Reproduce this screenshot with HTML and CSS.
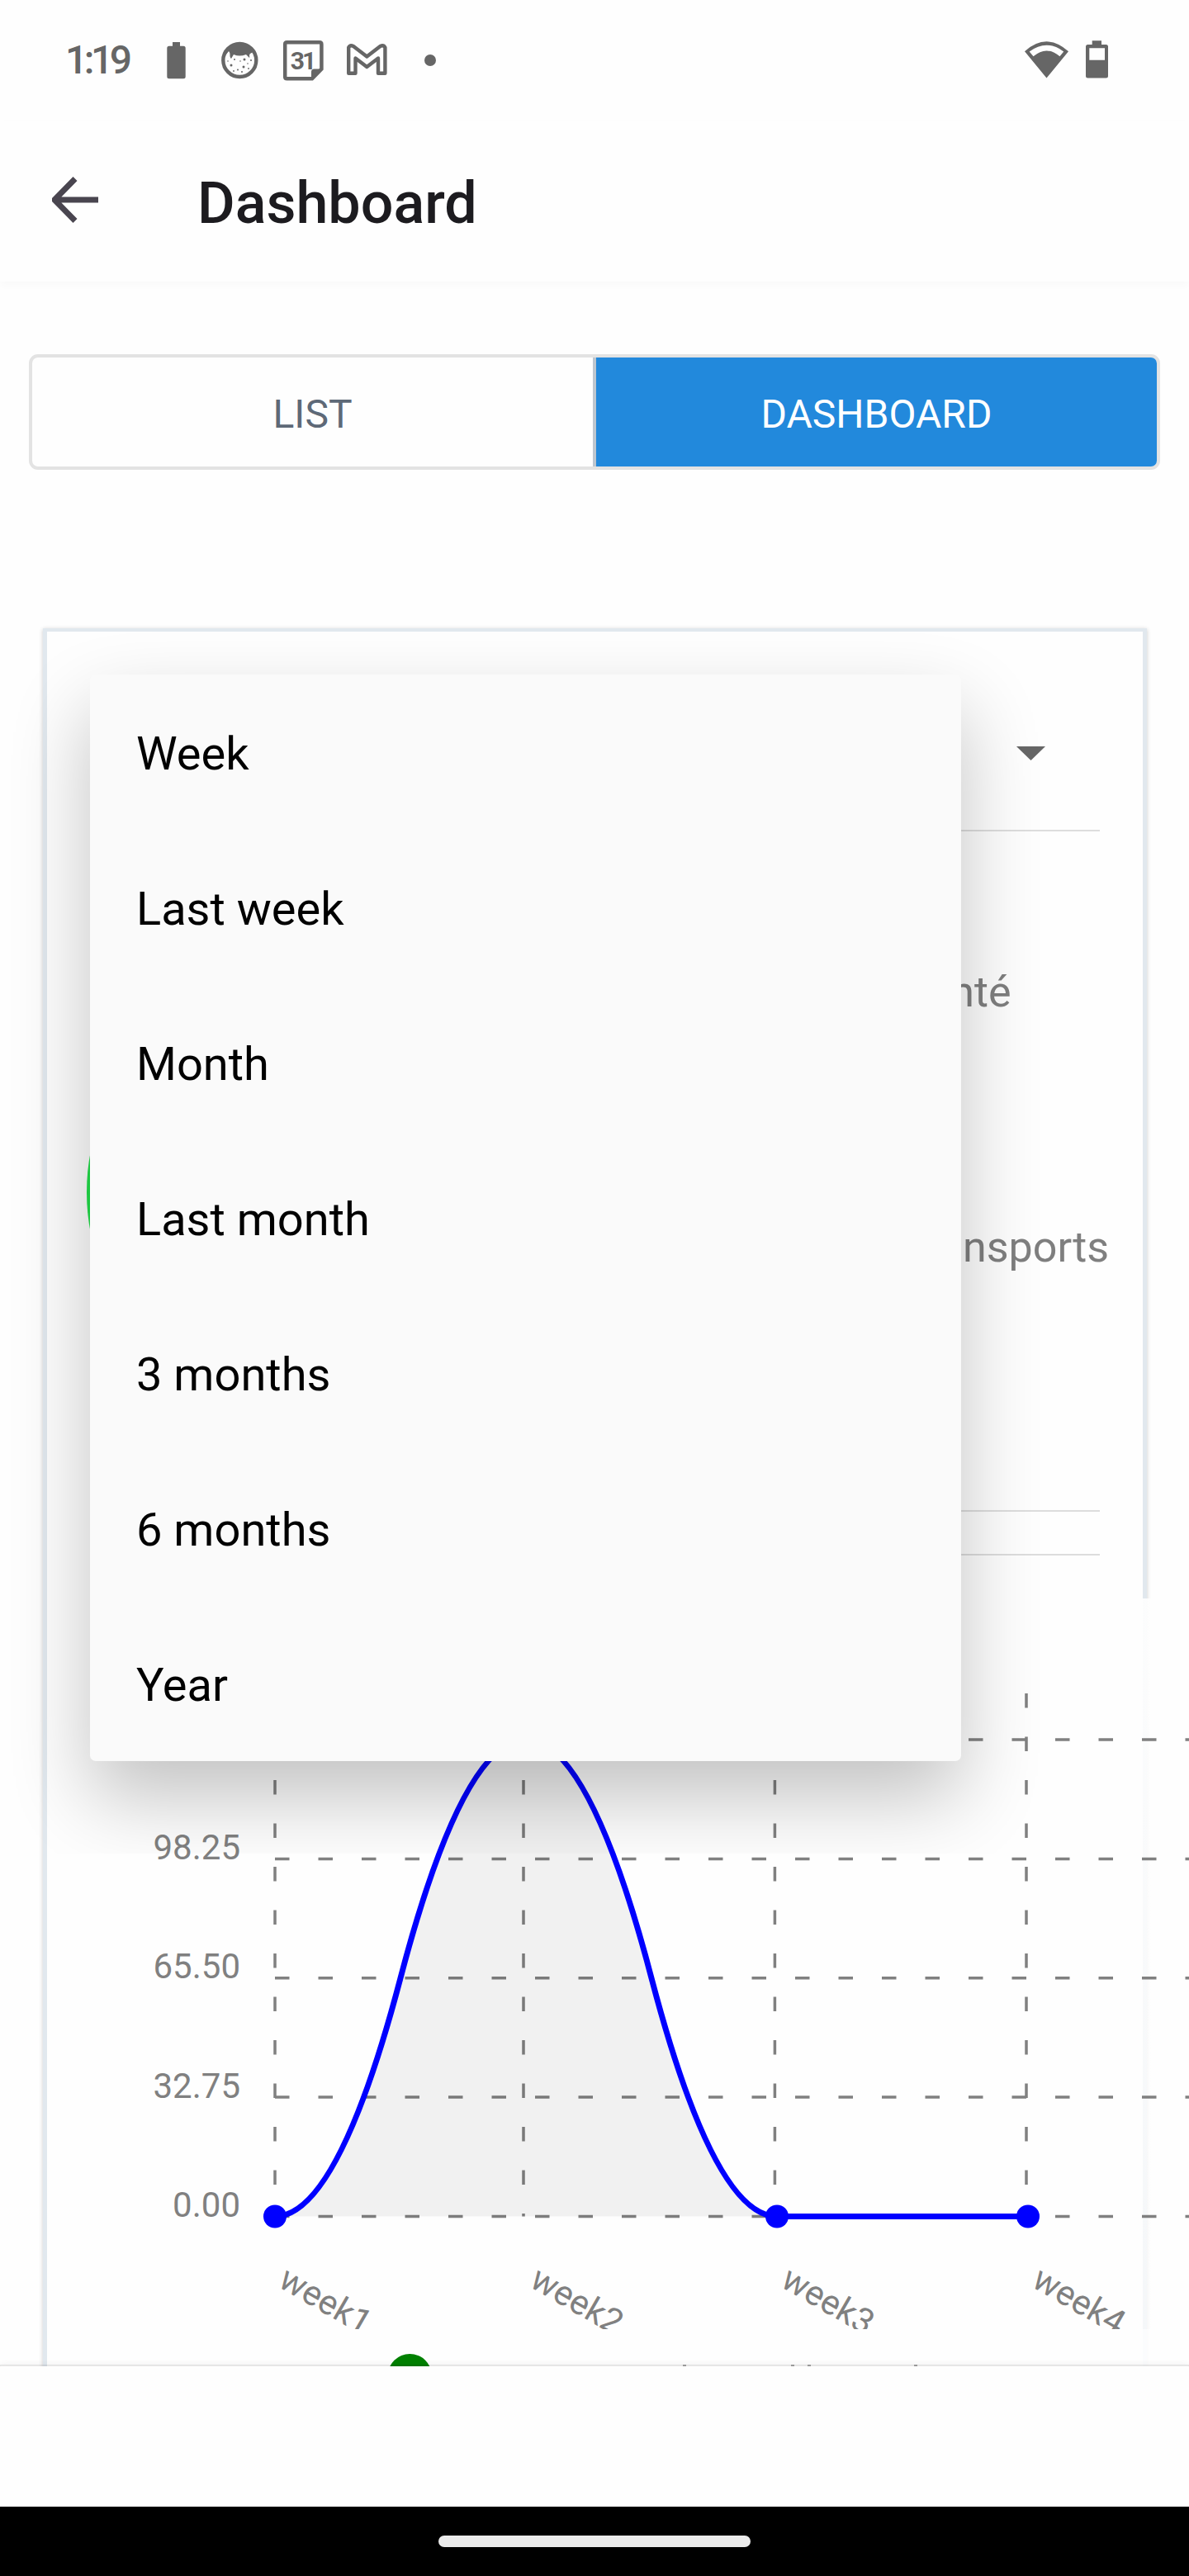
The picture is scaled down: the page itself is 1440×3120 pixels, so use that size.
FILE: index.html
```html
<!DOCTYPE html>
<html lang="en">
<head>
<meta charset="utf-8">
<title>Dashboard</title>
<link rel="stylesheet" href="styles.css">
</head>
<body>
<div class="screen">
  <div class="statusbar">
    <span class="clock">1:19</span>
    <svg class="status-left" width="340" height="60" viewBox="195 43 340 60" fill="#666">
      <path d="M209 51h9v4.700h4.200a2.500 2.500 0 0 1 2.500 2.500v34.600a2.500 2.500 0 0 1-2.500 2.500h-17.400a2.500 2.500 0 0 1-2.500-2.500V58.200a2.500 2.500 0 0 1 2.500-2.500h4.200z"/>
      <circle cx="290.300" cy="73" r="20" fill="none" stroke="#666" stroke-width="4.400"/>
      <path d="M273 62C280 50 301 50 308 62L303 65C301 67 303 69 302 70L298 66Q290 69 283 66L280 71C277 68 280 65 277 62L273 67Z"/>
      <g><circle cx="280" cy="79" r="1.500"/><circle cx="284" cy="72" r="1"/><circle cx="296" cy="72" r="1.500"/><circle cx="291" cy="74" r=".8"/><circle cx="295" cy="81" r="1.500"/><circle cx="288" cy="84.500" r="1"/><circle cx="283" cy="86" r=".9"/><circle cx="293" cy="87" r="1"/><circle cx="300" cy="77" r=".8"/><circle cx="304" cy="73" r="1"/><circle cx="276" cy="74" r=".8"/><circle cx="301" cy="83" r=".9"/></g>
      <path d="M347.500 51.300H387q2.400 0 2.400 2.400V83.500L378 95.200H347.500q-2.300 0-2.300-2.300V53.600q0-2.300 2.300-2.300z" fill="none" stroke="#666" stroke-width="4.500"/>
      <path d="M377 97V87q0-3.500 3.500-3.500h10z"/>
      <text class="cal-day" x="366" y="83.500" text-anchor="middle">31</text>
      <path d="M422.200 57.500Q424 54 428 56L444.300 68.500 460.500 56Q464.500 54 466.400 57.500V88.800H458V70.500L444.300 81 430.500 70.500V88.800H422.200Z" fill="none" stroke="#666" stroke-width="4.400" stroke-linejoin="round"/>
      <circle cx="521" cy="73" r="7"/>
    </svg>
    <svg class="status-right" width="110" height="60" viewBox="1236 43 110 60" fill="#666">
      <path fill-rule="evenodd" d="M1241 62.200Q1267.500 38.500 1294 62.200L1267.500 94.600ZM1246.700 62.500L1251.500 68.300Q1267.500 54.500 1283.500 68.300L1288.200 62.500Q1267.500 47 1246.700 62.500Z"/>
      <path fill-rule="evenodd" d="M1322.700 49.200h11.300v4.800h5.500a2.500 2.500 0 0 1 2.500 2.500v35.600a2.500 2.500 0 0 1-2.500 2.500h-22a2.500 2.500 0 0 1-2.500-2.500V56.500a2.500 2.500 0 0 1 2.500-2.500h5.200zM1319.300 58.300v14.400h18.700V58.300z"/>
    </svg>
  </div>
  <header class="appbar">
    <svg class="back" width="56" height="56" viewBox="0 0 56 56"><path d="M28 2.500L3 28l25 25.500M4 28h52" fill="none" stroke="#49454f" stroke-width="7"/></svg>
    <h1 class="title">Dashboard</h1>
  </header>
  <main class="content">
    <div class="segments">
      <div class="segment">LIST</div>
      <div class="segment segment-active">DASHBOARD</div>
    </div>
    <section class="card">
      <div class="picker"><svg width="35" height="17" viewBox="0 0 35 17"><path d="M0 0h35L17.500 17z" fill="#666"/></svg></div>
      <div class="pie">
        <svg width="512" height="512" viewBox="0 0 512 512"><circle cx="256" cy="256" r="256" fill="#21e14a"/></svg>
        <div class="legend"><span>Santé</span><span>Transports</span></div>
      </div>
      <div class="rule"></div>
      <div class="trend">
        <svg class="chart" width="1331" height="770" viewBox="0 0 1331 770">
          <g stroke="#808080" stroke-width="3.500" stroke-dasharray="17.500 35">
            <path d="M224 56H1331M224 200.400H1331M224 344.800H1331M224 489.100H1331M224 633.500H1331"/>
            <path d="M224 0V633.500M525 0V633.500M829.400 0V633.500M1134 0V633.500"/>
          </g>
          <path d="M224 633.500Q300 633.500 376 344.800Q452 56 528 56Q604 56 680 344.800Q756 633.500 832 633.500Z" fill="#000" fill-opacity=".05"/>
          <path d="M224 633.500Q300 633.500 376 344.800Q452 56 528 56Q604 56 680 344.800Q756 633.500 832 633.500H1136" fill="none" stroke="#00f" stroke-width="7"/>
          <g fill="#00f"><circle cx="224" cy="633.500" r="14"/><circle cx="528" cy="56" r="14"/><circle cx="832" cy="633.500" r="14"/><circle cx="1136" cy="633.500" r="14"/></g>
          <g class="axis" text-anchor="end"><text x="182" y="201">98.25</text><text x="182" y="345.400">65.50</text><text x="182" y="489.700">32.75</text><text x="182" y="634">0.00</text></g>
          <g class="axis"><text transform="translate(226 717.500) rotate(30)">week1</text><text transform="translate(530.500 717.500) rotate(30)">week2</text><text transform="translate(834.500 717.500) rotate(30)">week3</text><text transform="translate(1138.500 717.500) rotate(30)">week4</text></g>
        </svg>
      </div>
      <svg class="series" width="1331" height="45" viewBox="0 0 1331 45"><circle cx="387.300" cy="56.500" r="26.600" fill="#008000"/><path d="M718 44h4M849 44h4M869 44h4M998 44h4" stroke="#aaa" stroke-width="2"/></svg>
    </section>
    <div class="menu-layer">
      <ul class="menu">
        <li>Week</li><li>Last week</li><li>Month</li><li>Last month</li><li>3 months</li><li>6 months</li><li>Year</li>
      </ul>
    </div>
  </main>
  <footer class="tabbar"></footer>
  <div class="gesture"><span class="handle"></span></div>
</div>
</body>
</html>
```
FILE: styles.css
```css
* { box-sizing: border-box; }
body { margin: 0; background: #fefefe; font-family: Roboto, "Liberation Sans", sans-serif; }
.screen { width: 1440px; height: 3120px; display: flex; flex-direction: column; overflow: hidden; }
.statusbar { height: 146px; display: flex; align-items: center; padding: 0 94px 0 79px; }
.clock { width: 116px; font-size: 48px; line-height: 56px; font-weight: 500; color: #666; letter-spacing: -4.5px; }
.status-left { margin-right: auto; }
.cal-day { font-size: 30px; font-weight: 700; letter-spacing: -3px; }
.appbar { height: 195px; display: flex; align-items: center; padding: 0 63px 4px; box-shadow: 0 4px 10px rgba(0,0,0,.025); }
.title { margin: 9px 0 0 120px; font-size: 70px; line-height: 84px; font-weight: 500; color: #1c1b1f; }
.content { position: relative; height: 2525px; padding: 88px 35px 0; overflow: hidden; flex: none; }
.segments { display: flex; height: 140px; border: 4px solid #e3e3e3; border-radius: 11px; overflow: hidden; }
.segment { flex: 1; display: flex; align-items: center; justify-content: center; padding-top: 4px; font-size: 48px; color: #5e6977; }
.segment-active { background: #2289dc; color: #fff; border-left: 4px solid #bdc6cf; }
.card { width: 1337px; height: 2200px; margin: 192px 0 0 17px; padding: 0 0 0 52px; border: 5px solid #e1e8ee; border-top-width: 4px; box-shadow: 0 1px 5px rgba(0,0,0,.2); background: #fefefe; }
.picker { height: 242px; width: 1223px; border-bottom: 2px solid #ddd; display: flex; align-items: center; justify-content: flex-end; padding: 54px 66px 0 0; }
.pie { width: 1275px; height: 824px; display: flex; align-items: center; margin-left: -4px; padding-top: 50px; }
.pie svg { flex: none; }
.legend { margin: -176px 0 0 475px; display: flex; flex-direction: column; gap: 248px; font-size: 52px; line-height: 61px; color: #7f7f7f; }
.rule { width: 1223px; height: 55px; margin-top: -2px; border: solid #ddd; border-width: 2px 0; }
.trend { width: 1331px; height: 885px; margin-top: 52px; padding-top: 115px; position: relative; background: linear-gradient(rgba(254,254,254,.93), rgba(254,254,254,.68)); }
.chart { display: block; overflow: hidden; }
.axis { font-size: 42px; fill: #808080; }
.series { display: block; background: rgba(254,254,254,.9); }
.menu-layer { position: absolute; left: 0; top: 0; width: 1440px; height: 1904px; overflow: hidden; }
.menu { position: absolute; left: 109px; top: 476px; width: 1055px; margin: 0; padding: 0; list-style: none; background: #fafafa; border-radius: 7px; box-shadow: 0 44px 96px rgba(0,0,0,.24); }
.menu li { height: 188px; padding-left: 56px; font-size: 56px; line-height: 193px; color: #000; }
.tabbar { height: 172px; background: #fefefe; background-clip: padding-box; box-shadow: 0 0 8px rgba(0,0,0,.06); border-top: 2px solid rgba(0,0,0,.08); position: relative; flex: none; margin-top: -2px; }
.gesture { flex: 1; background: #000; display: flex; align-items: center; justify-content: center; position: relative; }
.handle { width: 378px; height: 14px; border-radius: 7px; background: #ebebeb; }
```
